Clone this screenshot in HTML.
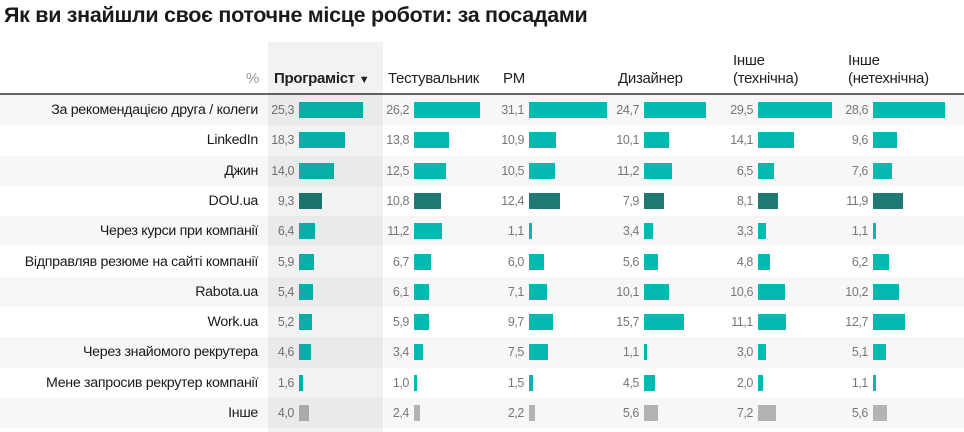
<!DOCTYPE html><html><head><meta charset="utf-8"><style>
body{margin:0;width:964px;height:432px;background:#fff;position:relative;overflow:hidden;font-family:"Liberation Sans","DejaVu Sans",sans-serif;color:#222}
h1{position:absolute;left:4px;top:3px;margin:0;font-size:21.5px;font-weight:bold;letter-spacing:-0.3px;color:#1a1a1a}
.hl{position:absolute;left:268px;top:42px;width:115px;height:390px;background:rgba(0,0,0,0.05)}
.hd{position:absolute;font-size:15px;line-height:18px;color:#222;letter-spacing:-0.3px}
.line{position:absolute;left:0;top:93px;width:964px;height:2px;background:#666}
.r{position:absolute;left:0;width:964px;height:30.3px}
.r.s{background:#f7f7f7}
.lb{position:absolute;right:706px;top:0;line-height:30px;font-size:14.2px;letter-spacing:-0.3px;white-space:nowrap;color:#1a1a1a}
.c{position:absolute;top:0;height:30px;display:flex;align-items:center}
.c i{font-style:normal;width:40px;text-align:right;margin-right:5px;font-size:12.5px;color:#777;letter-spacing:-0.4px}
.c b{display:block;height:16px;background:#06b9b0}
.d .c b{background:#1e7a72}
.g .c b{background:#b3b3b3}
.c1{left:254px}.c2{left:369px}.c3{left:484px}.c4{left:599px}.c5{left:713px}.c6{left:828px}
</style></head><body>
<h1>Як ви знайшли своє поточне місце роботи: за посадами</h1>
<div class="hd" style="left:246px;top:70px;color:#999">%</div>
<div class="hd" style="left:274px;top:70px;font-weight:bold">Програміст <span style="font-size:11px">▼</span></div>
<div class="hd" style="left:388px;top:70px">Тестувальник</div>
<div class="hd" style="left:503px;top:70px">PM</div>
<div class="hd" style="left:618px;top:70px">Дизайнер</div>
<div class="hd" style="left:733px;top:52px">Інше<br>(технічна)</div>
<div class="hd" style="left:848px;top:52px">Інше<br>(нетехнічна)</div>
<div class="line"></div>

<div class="r s" style="top:95px"><div class="lb">За рекомендацією друга / колеги</div>
<div class="c c1"><i>25,3</i><b style="width:64px"></b></div><div class="c c2"><i>26,2</i><b style="width:66px"></b></div><div class="c c3"><i>31,1</i><b style="width:78px"></b></div><div class="c c4"><i>24,7</i><b style="width:62px"></b></div><div class="c c5"><i>29,5</i><b style="width:74px"></b></div><div class="c c6"><i>28,6</i><b style="width:72px"></b></div></div>

<div class="r" style="top:125.3px"><div class="lb">LinkedIn</div>
<div class="c c1"><i>18,3</i><b style="width:46px"></b></div><div class="c c2"><i>13,8</i><b style="width:35px"></b></div><div class="c c3"><i>10,9</i><b style="width:27px"></b></div><div class="c c4"><i>10,1</i><b style="width:25px"></b></div><div class="c c5"><i>14,1</i><b style="width:36px"></b></div><div class="c c6"><i>9,6</i><b style="width:24px"></b></div></div>

<div class="r s" style="top:155.6px"><div class="lb">Джин</div>
<div class="c c1"><i>14,0</i><b style="width:35px"></b></div><div class="c c2"><i>12,5</i><b style="width:32px"></b></div><div class="c c3"><i>10,5</i><b style="width:26px"></b></div><div class="c c4"><i>11,2</i><b style="width:28px"></b></div><div class="c c5"><i>6,5</i><b style="width:16px"></b></div><div class="c c6"><i>7,6</i><b style="width:19px"></b></div></div>

<div class="r d" style="top:185.9px"><div class="lb">DOU.ua</div>
<div class="c c1"><i>9,3</i><b style="width:23px"></b></div><div class="c c2"><i>10,8</i><b style="width:27px"></b></div><div class="c c3"><i>12,4</i><b style="width:31px"></b></div><div class="c c4"><i>7,9</i><b style="width:20px"></b></div><div class="c c5"><i>8,1</i><b style="width:20px"></b></div><div class="c c6"><i>11,9</i><b style="width:30px"></b></div></div>

<div class="r s" style="top:216.2px"><div class="lb">Через курси при компанії</div>
<div class="c c1"><i>6,4</i><b style="width:16px"></b></div><div class="c c2"><i>11,2</i><b style="width:28px"></b></div><div class="c c3"><i>1,1</i><b style="width:3px"></b></div><div class="c c4"><i>3,4</i><b style="width:9px"></b></div><div class="c c5"><i>3,3</i><b style="width:8px"></b></div><div class="c c6"><i>1,1</i><b style="width:3px"></b></div></div>

<div class="r" style="top:246.5px"><div class="lb">Відправляв резюме на сайті компанії</div>
<div class="c c1"><i>5,9</i><b style="width:15px"></b></div><div class="c c2"><i>6,7</i><b style="width:17px"></b></div><div class="c c3"><i>6,0</i><b style="width:15px"></b></div><div class="c c4"><i>5,6</i><b style="width:14px"></b></div><div class="c c5"><i>4,8</i><b style="width:12px"></b></div><div class="c c6"><i>6,2</i><b style="width:16px"></b></div></div>

<div class="r s" style="top:276.8px"><div class="lb">Rabota.ua</div>
<div class="c c1"><i>5,4</i><b style="width:14px"></b></div><div class="c c2"><i>6,1</i><b style="width:15px"></b></div><div class="c c3"><i>7,1</i><b style="width:18px"></b></div><div class="c c4"><i>10,1</i><b style="width:25px"></b></div><div class="c c5"><i>10,6</i><b style="width:27px"></b></div><div class="c c6"><i>10,2</i><b style="width:26px"></b></div></div>

<div class="r" style="top:307.1px"><div class="lb">Work.ua</div>
<div class="c c1"><i>5,2</i><b style="width:13px"></b></div><div class="c c2"><i>5,9</i><b style="width:15px"></b></div><div class="c c3"><i>9,7</i><b style="width:24px"></b></div><div class="c c4"><i>15,7</i><b style="width:40px"></b></div><div class="c c5"><i>11,1</i><b style="width:28px"></b></div><div class="c c6"><i>12,7</i><b style="width:32px"></b></div></div>

<div class="r s" style="top:337.4px"><div class="lb">Через знайомого рекрутера</div>
<div class="c c1"><i>4,6</i><b style="width:12px"></b></div><div class="c c2"><i>3,4</i><b style="width:9px"></b></div><div class="c c3"><i>7,5</i><b style="width:19px"></b></div><div class="c c4"><i>1,1</i><b style="width:3px"></b></div><div class="c c5"><i>3,0</i><b style="width:8px"></b></div><div class="c c6"><i>5,1</i><b style="width:13px"></b></div></div>

<div class="r" style="top:367.7px"><div class="lb">Мене запросив рекрутер компанії</div>
<div class="c c1"><i>1,6</i><b style="width:4px"></b></div><div class="c c2"><i>1,0</i><b style="width:3px"></b></div><div class="c c3"><i>1,5</i><b style="width:4px"></b></div><div class="c c4"><i>4,5</i><b style="width:11px"></b></div><div class="c c5"><i>2,0</i><b style="width:5px"></b></div><div class="c c6"><i>1,1</i><b style="width:3px"></b></div></div>

<div class="r s g" style="top:398px"><div class="lb">Інше</div>
<div class="c c1"><i>4,0</i><b style="width:10px"></b></div><div class="c c2"><i>2,4</i><b style="width:6px"></b></div><div class="c c3"><i>2,2</i><b style="width:6px"></b></div><div class="c c4"><i>5,6</i><b style="width:14px"></b></div><div class="c c5"><i>7,2</i><b style="width:18px"></b></div><div class="c c6"><i>5,6</i><b style="width:14px"></b></div></div>

<div class="hl"></div>
</body></html>
